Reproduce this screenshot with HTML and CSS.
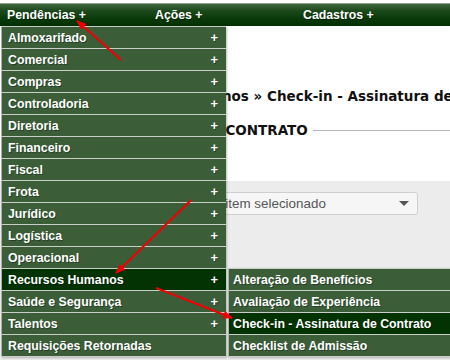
FILE: index.html
```html
<!DOCTYPE html>
<html lang="pt-BR">
<head>
  <meta charset="UTF-8">
  <title>Check-in - Assinatura de Contrato</title>
  <link rel="stylesheet" href="styles.css">
</head>
<body>
  <header class="topbar">
    <span class="top-item">Pendências +</span>
    <span class="top-item">Ações +</span>
    <span class="top-item">Cadastros +</span>
  </header>

  <main class="page">
    <h1 class="crumb">Recursos Humanos » Check-in - Assinatura de Contrato</h1>
    <div class="legend">
      <span class="legend-text">CHECK-IN - ASSINATURA DE CONTRATO</span>
      <span class="legend-line"></span>
    </div>
    <section class="filter">
      <div class="select">
        <span>Nenhum item selecionado</span>
        <span class="caret"></span>
      </div>
    </section>
  </main>

  <nav class="menu">
    <a class="menu-item">Almoxarifado <b>+</b></a>
    <a class="menu-item">Comercial <b>+</b></a>
    <a class="menu-item">Compras <b>+</b></a>
    <a class="menu-item">Controladoria <b>+</b></a>
    <a class="menu-item">Diretoria <b>+</b></a>
    <a class="menu-item">Financeiro <b>+</b></a>
    <a class="menu-item">Fiscal <b>+</b></a>
    <a class="menu-item">Frota <b>+</b></a>
    <a class="menu-item">Jurídico <b>+</b></a>
    <a class="menu-item">Logística <b>+</b></a>
    <a class="menu-item">Operacional <b>+</b></a>
    <a class="menu-item active">Recursos Humanos <b>+</b></a>
    <a class="menu-item">Saúde e Segurança <b>+</b></a>
    <a class="menu-item">Talentos <b>+</b></a>
    <a class="menu-item">Requisições Retornadas</a>
  </nav>

  <nav class="menu submenu">
    <a class="menu-item">Alteração de Benefícios</a>
    <a class="menu-item">Avaliação de Experiência</a>
    <a class="menu-item active">Check-in - Assinatura de Contrato</a>
    <a class="menu-item">Checklist de Admissão</a>
  </nav>

  <!-- setas de destaque -->
  <svg class="arrows" width="450" height="360" viewBox="0 0 450 360">
    <defs>
      <marker id="head" markerWidth="10" markerHeight="8" refX="9" refY="4" orient="auto" markerUnits="userSpaceOnUse">
        <path d="M0,0 L10,4 L0,8 Z" fill="#f00000"/>
      </marker>
    </defs>
    <line x1="121" y1="60" x2="77" y2="21" stroke="#f00000" stroke-width="2" marker-end="url(#head)"/>
    <line x1="191" y1="200" x2="116" y2="273" stroke="#f00000" stroke-width="2" marker-end="url(#head)"/>
    <line x1="156" y1="288" x2="232" y2="318" stroke="#f00000" stroke-width="2" marker-end="url(#head)"/>
  </svg>
</body>
</html>
```

FILE: styles.css
```css
body {
  margin: 0;
  font-family: "Liberation Sans", Arial, sans-serif;
  background: #fff;
  overflow: hidden;
  width: 450px;
  height: 360px;
  position: relative;
}
.topbar {
  margin-top: 3px;
  height: 22px;
  border-top: 1px solid #8e9e8e;
  display: grid;
  grid-template-columns: 148px 148px 148px;
  align-items: center;
  padding-left: 7px;
  background: linear-gradient(#3f663d 0, #1c4a1c 30%, #0a3a0a 65%, #023002 100%);
}
.top-item {
  color: #fff;
  font-weight: bold;
  font-size: 12.3px;
  text-shadow: 1px 1px 0 rgba(0, 0, 0, 0.35);
}
.page {
  font-family: "DejaVu Sans", Verdana, sans-serif;
  width: 450px;
  overflow: hidden;
}
.crumb {
  margin: 0;
  padding: 61px 0 0 104px;
  font-size: 13.5px;
  line-height: 18px;
  white-space: nowrap;
  color: #111;
}
.legend {
  display: flex;
  align-items: center;
  gap: 5px;
  margin-top: 16px;
  padding-left: 13px;
  font-weight: bold;
  font-size: 13.5px;
  line-height: 18px;
  white-space: nowrap;
  color: #111;
}
.legend-line {
  flex: 1;
  border-top: 1px solid #b8b8b8;
}
.filter {
  margin-top: 42px;
  height: 200px;
  background: #ececec;
  padding: 11px 0 0 158px;
  font-family: "Liberation Sans", Arial, sans-serif;
}
.select {
  width: 238px;
  height: 21px;
  box-sizing: content-box;
  border: 1px solid #cfcfcf;
  border-radius: 3px;
  background: #f6f6f6;
  display: flex;
  align-items: center;
  justify-content: space-between;
  padding: 0 8px 0 12px;
  font-size: 13.4px;
  color: #555;
}
.caret {
  width: 0;
  height: 0;
  border-left: 5px solid transparent;
  border-right: 5px solid transparent;
  border-top: 5px solid #555;
}
.menu {
  position: absolute;
  top: 26px;
  left: 1px;
  width: 225px;
  border-top: 1px solid #c9cec9;
  box-shadow: 1px 1px 2px rgba(0, 0, 0, 0.25);
}
.submenu {
  top: 268px;
  left: 228px;
  width: 222px;
}
.menu-item {
  display: flex;
  justify-content: space-between;
  align-items: center;
  height: 21px;
  border-bottom: 1px solid #c9cec9;
  border-left: 1px solid #aab3aa;
  padding: 0 8px 0 6px;
  background: #3b5e39;
  color: #fff;
  font-weight: bold;
  font-size: 12.3px;
  white-space: nowrap;
  text-shadow: 1px 1px 0 rgba(0, 0, 0, 0.35);
}
.submenu .menu-item {
  padding-left: 4px;
}
.menu-item b {
  font-size: 13px;
}
.menu-item.active {
  background: #033303;
}
.arrows {
  position: absolute;
  top: 0;
  left: 0;
}
```
